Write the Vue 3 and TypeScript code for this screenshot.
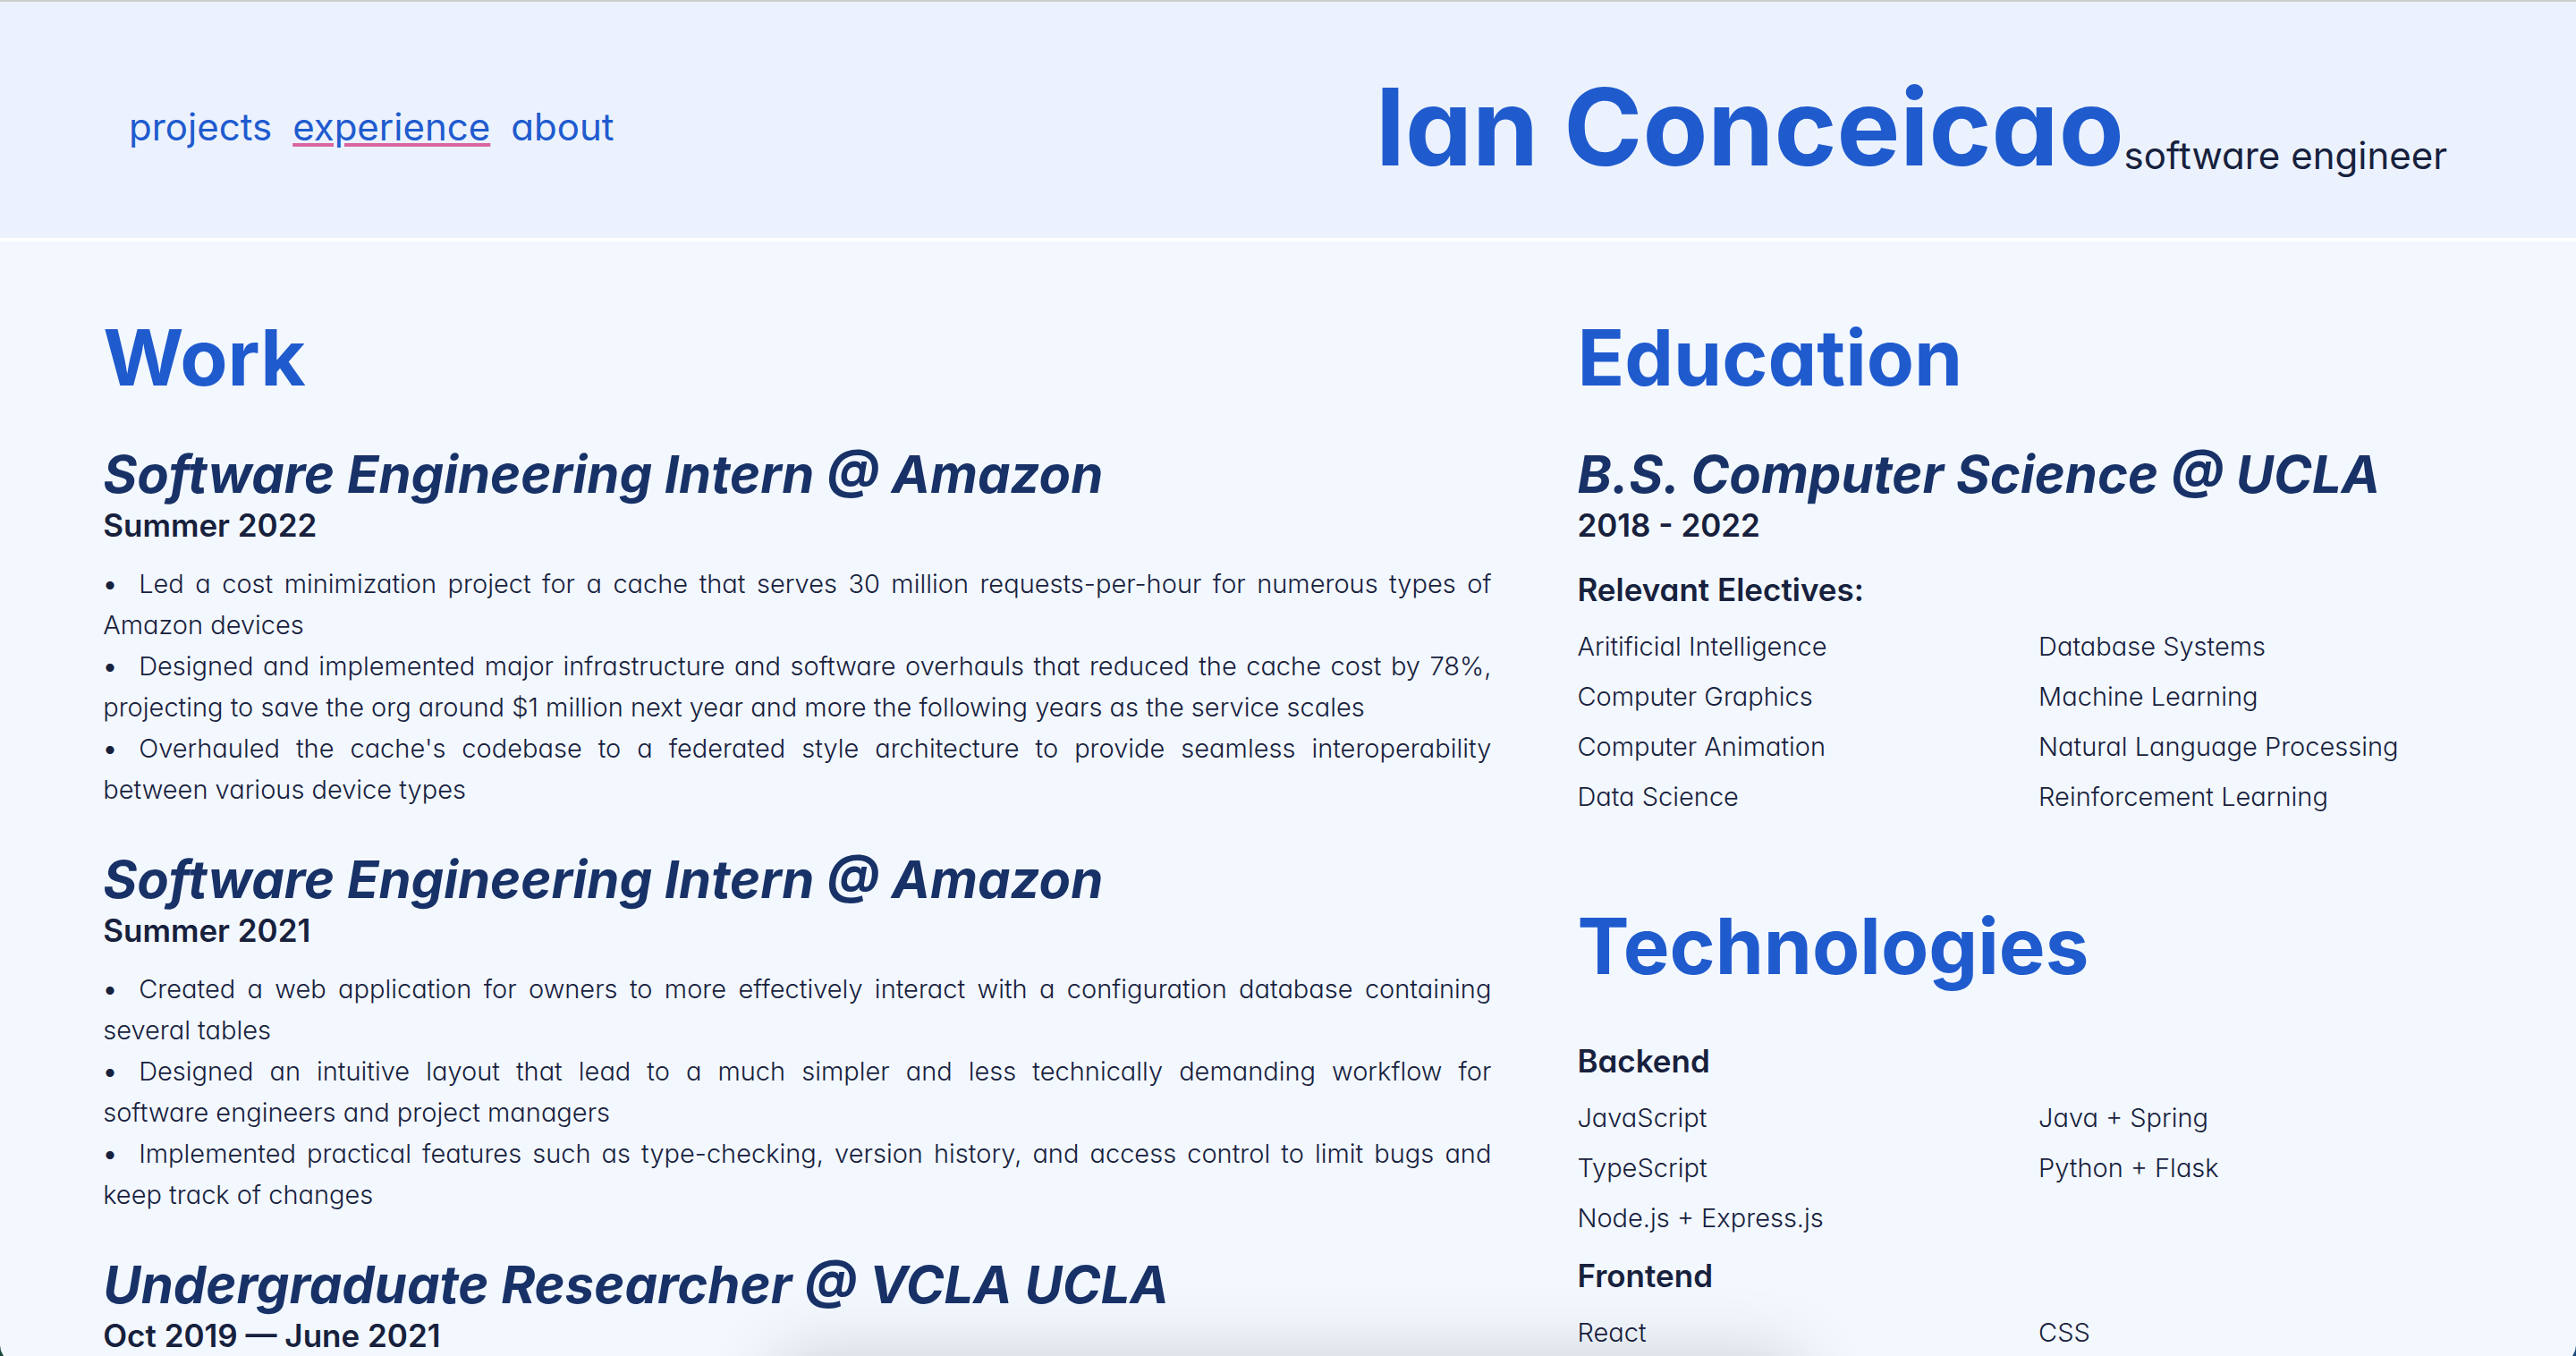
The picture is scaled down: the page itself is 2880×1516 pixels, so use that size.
<script setup lang="ts">
interface Job {
  title: string
  date: string
  points: string[]
}

interface TopicGroup {
  title: string
  items: string[]
}

const links = ['projects', 'experience', 'about']
const current = 'experience'

const jobs: Job[] = [
  {
    title: 'Software Engineering Intern @ Amazon',
    date: 'Summer 2022',
    points: [
      'Led a cost minimization project for a cache that serves 30 million requests-per-hour for numerous types of Amazon devices',
      'Designed and implemented major infrastructure and software overhauls that reduced the cache cost by 78%, projecting to save the org around $1 million next year and more the following years as the service scales',
      "Overhauled the cache's codebase to a federated style architecture to provide seamless interoperability between various device types"
    ]
  },
  {
    title: 'Software Engineering Intern @ Amazon',
    date: 'Summer 2021',
    points: [
      'Created a web application for owners to more effectively interact with a configuration database containing several tables',
      'Designed an intuitive layout that lead to a much simpler and less technically demanding workflow for software\u00a0engineers and project managers',
      'Implemented practical features such as type-checking, version history, and access control to limit bugs and keep track of changes'
    ]
  },
  {
    title: 'Undergraduate Researcher @ VCLA UCLA',
    date: 'Oct 2019 — June 2021',
    points: []
  }
]

const electives: string[] = [
  'Aritificial Intelligence',
  'Database Systems',
  'Computer Graphics',
  'Machine Learning',
  'Computer Animation',
  'Natural Language Processing',
  'Data Science',
  'Reinforcement Learning'
]

const technologies: TopicGroup[] = [
  {
    title: 'Backend',
    items: ['JavaScript', 'Java + Spring', 'TypeScript', 'Python + Flask', 'Node.js + Express.js']
  },
  { title: 'Frontend', items: ['React', 'CSS'] }
]
</script>

<template>
  <div class="page">
    <header class="header">
      <nav class="nav">
        <a
          v-for="link in links"
          :key="link"
          :href="'#' + link"
          class="nav-link"
          :class="{ active: link === current }"
          >{{ link }}</a
        >
      </nav>
      <div class="brand">
        <h1 class="name">Ian Conceicao</h1>
        <span class="role">software engineer</span>
      </div>
    </header>

    <main class="content">
      <section class="column">
        <h2 class="section-title">Work</h2>
        <article v-for="job in jobs" :key="job.title + job.date" class="job">
          <h3 class="entry-title">{{ job.title }}</h3>
          <p class="label">{{ job.date }}</p>
          <ul v-if="job.points.length" class="points">
            <li v-for="point in job.points" :key="point">{{ point }}</li>
          </ul>
        </article>
      </section>

      <div class="column">
        <section class="education">
          <h2 class="section-title">Education</h2>
          <h3 class="entry-title">B.S. Computer Science @ UCLA</h3>
          <p class="label">2018 - 2022</p>
          <h4 class="label electives-title">Relevant Electives:</h4>
          <ul class="topics">
            <li v-for="item in electives" :key="item">{{ item }}</li>
          </ul>
        </section>
        <section class="technologies">
          <h2 class="section-title">Technologies</h2>
          <div v-for="group in technologies" :key="group.title" class="group">
            <h4 class="label">{{ group.title }}</h4>
            <ul class="topics">
              <li v-for="item in group.items" :key="item">{{ item }}</li>
            </ul>
          </div>
        </section>
      </div>
    </main>

    <div class="dock-shadow" aria-hidden="true"></div>
    <div class="corner corner-left" aria-hidden="true"></div>
    <div class="corner corner-right" aria-hidden="true"></div>
  </div>
</template>

<style>
body {
  margin: 0;
  background: #f3f8ff;
}
</style>

<style scoped>
.page {
  height: 100vh;
  overflow-y: auto;
  scrollbar-width: none;
  background: #f3f8ff;
  color: #17213d;
  font-family: Inter, 'Open Sans', sans-serif;
  font-feature-settings: 'cv11';
  font-size: 29px;
}

h1,
h2,
h3,
h4,
p,
ul {
  margin: 0;
  padding: 0;
}

ul {
  list-style: none;
}

.header {
  display: flex;
  align-items: center;
  justify-content: space-between;
  padding: 68px 5% 52px;
  border-top: 2px solid #cacdca;
  border-bottom: 4px solid #ffffff;
  background: #ebf2fe;
}

.nav {
  display: flex;
  gap: 23px;
}

.nav-link {
  color: #205bce;
  font-size: 42px;
  line-height: 50px;
  text-decoration: none;
}

.nav-link.active {
  text-decoration: underline 4px #d9669f;
  text-underline-offset: 3px;
}

.brand {
  display: flex;
  align-items: flex-end;
}

.name {
  color: #205bce;
  font-size: 119px;
  font-weight: 700;
  line-height: 144px;
}

.role {
  font-size: 42px;
  line-height: 80px;
}

.content {
  display: grid;
  grid-template-columns: 31fr 20fr;
  column-gap: 96px;
  padding: 82px 4% 0;
}

.section-title {
  color: #205bce;
  font-size: 87px;
  font-weight: 700;
  line-height: 96px;
  margin-bottom: 48px;
}

.entry-title {
  color: #183268;
  font-size: 58px;
  font-style: italic;
  font-weight: 700;
  line-height: 68px;
}

.label {
  font-size: 35px;
  font-weight: 600;
  line-height: 46px;
}

.job + .job {
  margin-top: 43px;
}

.points {
  margin-top: 20px;
  font-weight: 350;
  line-height: 46px;
  text-align: justify;
}

.points li::before {
  content: '•';
  display: inline-block;
  width: 40px;
  font-weight: 500;
}

.electives-title {
  margin-top: 26px;
}

.topics {
  display: grid;
  grid-template-columns: 1fr 1fr;
  column-gap: 30px;
  margin-top: 13px;
  font-weight: 350;
  line-height: 56px;
}

.technologies {
  margin-top: 91px;
}

.technologies .section-title {
  margin-bottom: 57px;
}

.group + .group {
  margin-top: 13px;
}

/* soft shadow cast upward from just below the window edge */
.dock-shadow {
  position: fixed;
  top: 100%;
  left: 30%;
  right: 30%;
  height: 120px;
  border-radius: 32px;
  box-shadow: 0 0 80px rgba(0, 0, 0, 0.16);
  pointer-events: none;
}

.corner {
  position: fixed;
  bottom: 0;
  width: 4px;
  height: 12px;
}

.corner-left {
  left: 0;
  background: #1f4a3e;
  clip-path: polygon(0 0, 25% 50%, 100% 100%, 0 100%);
}

.corner-right {
  right: 0;
  background: #1d4a7c;
  clip-path: polygon(100% 0, 75% 50%, 0 100%, 100% 100%);
}
</style>
